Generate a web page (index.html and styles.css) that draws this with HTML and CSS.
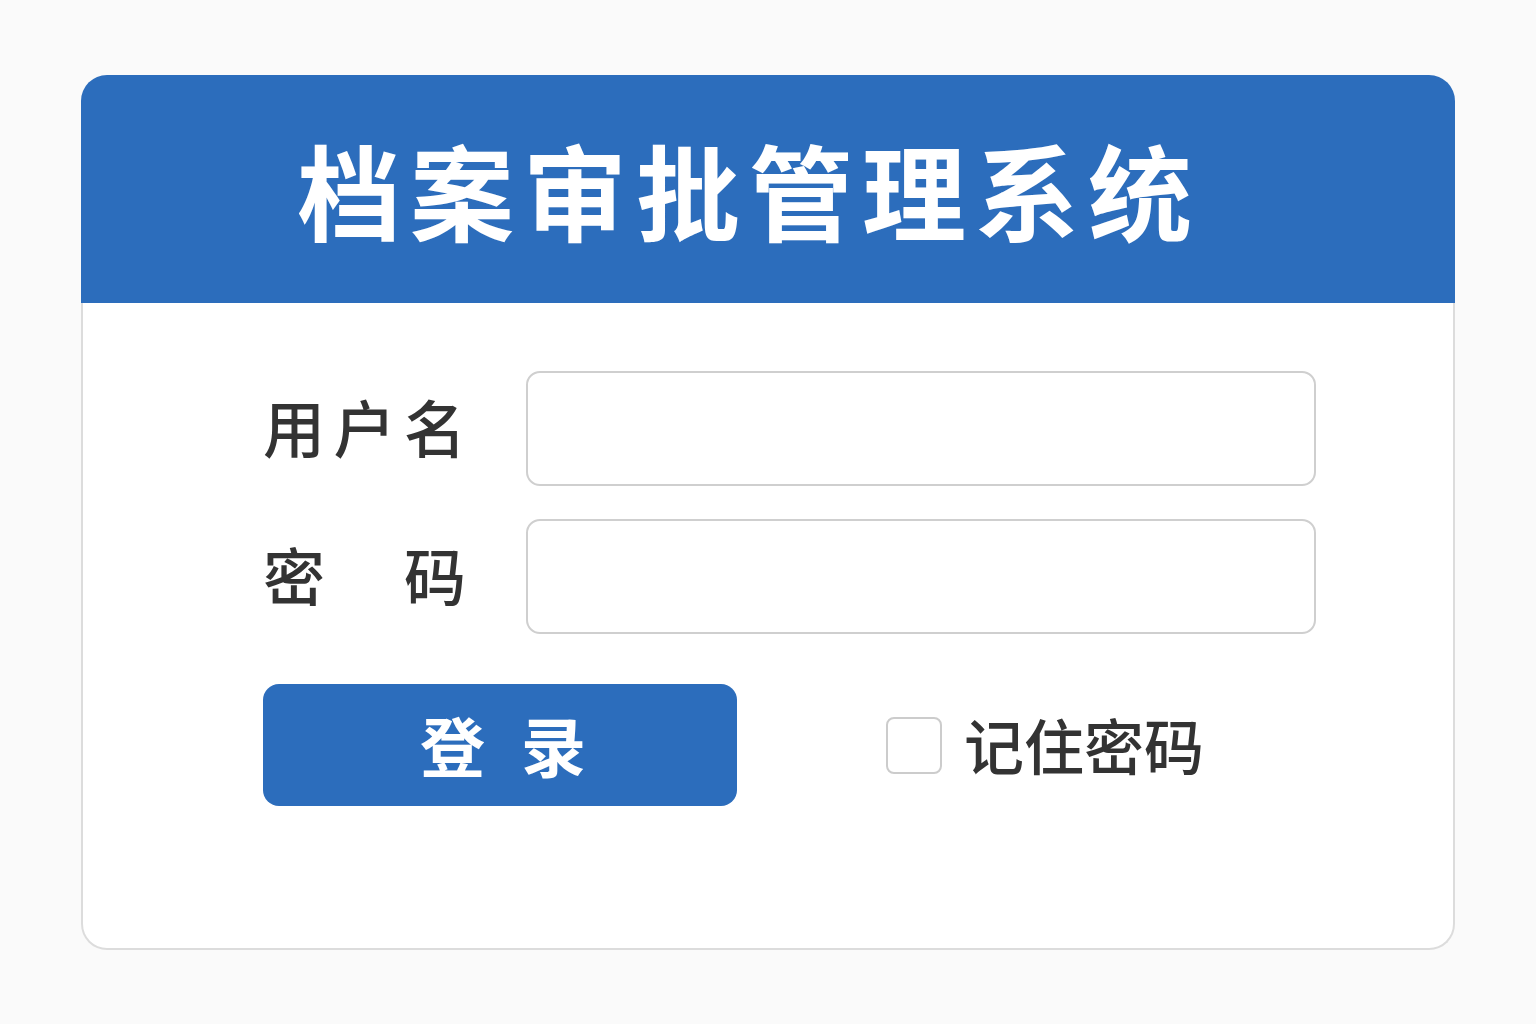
FILE: index.html
```html
<!DOCTYPE html>
<html lang="zh-CN">
<head>
<meta charset="utf-8">
<title>档案审批管理系统</title>
<link rel="stylesheet" href="styles.css">
</head>
<body>
<div class="page">
  <div class="card">
    <div class="card-header">
      <h1 class="title">档案审批管理系统</h1>
    </div>
    <div class="card-body">
      <div class="form-grid">
        <label class="label"><span>用</span><span>户</span><span>名</span></label>
        <div class="input"></div>
        <label class="label"><span>密</span><span>码</span></label>
        <div class="input"></div>
      </div>
      <div class="actions">
        <button class="btn">登录</button>
        <div class="remember">
          <span class="checkbox"></span>
          <span class="remember-text">记住密码</span>
        </div>
      </div>
    </div>
  </div>
</div>
</body>
</html>
```

FILE: styles.css
```css
html, body {
  margin: 0;
  padding: 0;
}
body {
  background: #fafafa;
  font-family: "Noto Sans CJK SC", "Noto Sans", sans-serif;
  width: 1536px;
  height: 1024px;
  overflow: hidden;
}
.page {
  padding: 75px 0 0 81px;
}
.card {
  width: 1374px;
  height: 875px;
  display: flex;
  flex-direction: column;
}
.card-header {
  background: #2c6dbc;
  height: 228px;
  border-radius: 26px 26px 0 0;
  display: flex;
  align-items: center;
  justify-content: center;
  padding-right: 38px;
  flex-shrink: 0;
}
.title {
  margin: 0;
  color: #ffffff;
  font-size: 104px;
  font-weight: 700;
  line-height: 1;
  letter-spacing: 9px;
}
.card-body {
  flex: 1;
  background: #ffffff;
  border: 2px solid #dcdcdc;
  border-top: none;
  border-radius: 0 0 26px 26px;
  padding: 68px 137px 0 180px;
}
.form-grid {
  display: grid;
  grid-template-columns: 203px 790px;
  column-gap: 60px;
  row-gap: 33px;
  align-items: center;
}
.label {
  display: flex;
  justify-content: space-between;
  font-size: 62px;
  font-weight: 500;
  color: #333333;
  line-height: 1;
  padding-bottom: 6px;
}
.input {
  height: 115px;
  box-sizing: border-box;
  border: 2px solid #cfcfcf;
  border-radius: 14px;
  background: #fff;
}
.actions {
  display: flex;
  align-items: center;
  margin-top: 50px;
}
.btn {
  width: 474px;
  height: 122px;
  border: none;
  border-radius: 16px;
  background: #2c6dbc;
  color: #ffffff;
  font-family: "Noto Sans CJK SC", sans-serif;
  font-size: 65px;
  font-weight: 700;
  letter-spacing: 36px;
  text-indent: 42px;
  line-height: 1;
  padding: 0 0 2px 0;
}
.remember {
  display: flex;
  align-items: center;
  margin-left: 149px;
}
.checkbox {
  width: 56px;
  height: 57px;
  box-sizing: border-box;
  border: 2px solid #cccccc;
  border-radius: 8px;
  background: #fff;
}
.remember-text {
  margin-left: 22px;
  font-size: 60px;
  font-weight: 500;
  color: #333333;
  line-height: 1;
  padding-bottom: 2px;
}
```
